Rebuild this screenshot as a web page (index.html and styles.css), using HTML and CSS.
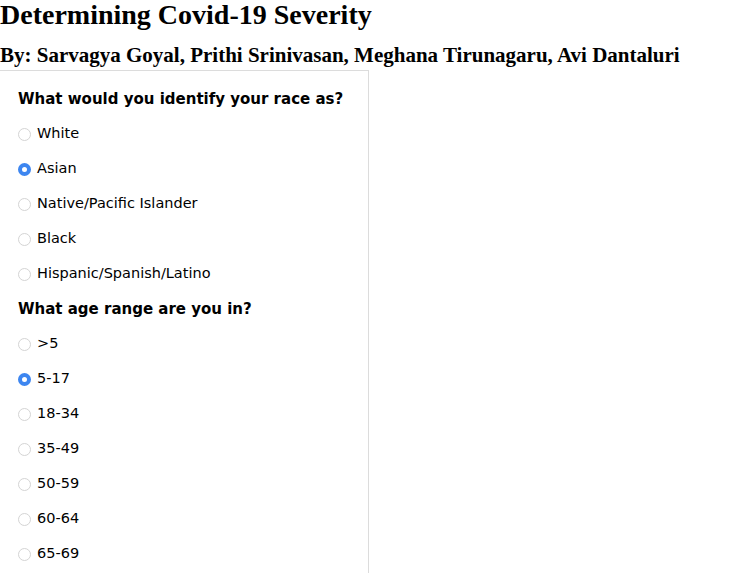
FILE: index.html
```html
<!DOCTYPE html>
<html>
<head>
<meta charset="utf-8">
<link rel="stylesheet" href="styles.css">
</head>
<body>
<h1 class="title">Determining Covid-19 Severity</h1>
<h2 class="byline">By: Sarvagya Goyal, Prithi Srinivasan, Meghana Tirunagaru, Avi Dantaluri</h2>
<form class="panel">
  <div class="question">What would you identify your race as?</div>
  <label class="option"><input type="radio" name="race"><span>White</span></label>
  <label class="option"><input type="radio" name="race" checked><span>Asian</span></label>
  <label class="option"><input type="radio" name="race"><span>Native/Pacific Islander</span></label>
  <label class="option"><input type="radio" name="race"><span>Black</span></label>
  <label class="option"><input type="radio" name="race"><span>Hispanic/Spanish/Latino</span></label>
  <div class="question">What age range are you in?</div>
  <label class="option"><input type="radio" name="age"><span>&gt;5</span></label>
  <label class="option"><input type="radio" name="age" checked><span>5-17</span></label>
  <label class="option"><input type="radio" name="age"><span>18-34</span></label>
  <label class="option"><input type="radio" name="age"><span>35-49</span></label>
  <label class="option"><input type="radio" name="age"><span>50-59</span></label>
  <label class="option"><input type="radio" name="age"><span>60-64</span></label>
  <label class="option"><input type="radio" name="age"><span>65-69</span></label>
</form>
</body>
</html>
```

FILE: styles.css
```css
html, body {
  margin: 0;
  padding: 0;
  background: #fff;
  color: #000;
}
.title {
  font-family: "Liberation Serif", "Times New Roman", serif;
  font-weight: bold;
  font-size: 28px;
  line-height: 30px;
  margin: 0;
}
.byline {
  font-family: "Liberation Serif", "Times New Roman", serif;
  font-weight: bold;
  font-size: 21px;
  line-height: 24px;
  margin: 13px 0 3px 0;
}
.panel {
  width: 350px;
  box-sizing: content-box;
  padding: 10px 0 12px 18px;
  border-top: 1px solid #dcdcdc;
  border-right: 1px solid #dcdcdc;
  font-family: "DejaVu Sans", Verdana, sans-serif;
}
.question {
  height: 35px;
  display: flex;
  align-items: center;
  font-weight: bold;
  font-size: 15px;
}
.option {
  height: 35px;
  box-sizing: border-box;
  padding-bottom: 2px;
  display: flex;
  align-items: center;
  font-size: 14.5px;
}
.option input {
  appearance: none;
  -webkit-appearance: none;
  width: 13px;
  height: 13px;
  margin: 4px 6px 0 0;
  border: 1px solid #d4d4d4;
  border-radius: 50%;
  background: #fff;
  box-sizing: border-box;
}
.option input:checked {
  border: 4px solid #3d86f0;
  background: #fff;
}
```
